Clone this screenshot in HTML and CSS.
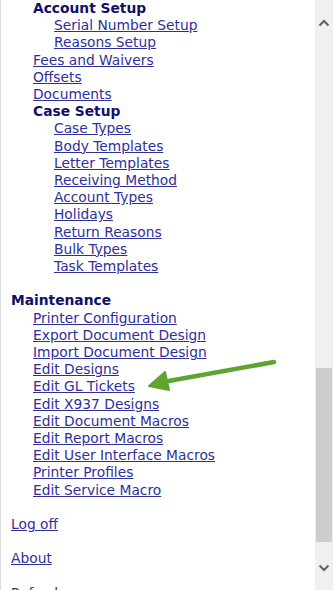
FILE: index.html
```html
<!DOCTYPE html>
<html>
<head>
<meta charset="utf-8">
<link rel="stylesheet" href="styles.css">
</head>
<body>
<div class="frame">
  <div class="content">
    <ul class="menu">
      <li class="l2 head">Account Setup</li>
      <li class="l3"><a href="#">Serial Number Setup</a></li>
      <li class="l3"><a href="#">Reasons Setup</a></li>
      <li class="l2"><a href="#">Fees and Waivers</a></li>
      <li class="l2"><a href="#">Offsets</a></li>
      <li class="l2"><a href="#">Documents</a></li>
      <li class="l2 head">Case Setup</li>
      <li class="l3"><a href="#">Case Types</a></li>
      <li class="l3"><a href="#">Body Templates</a></li>
      <li class="l3"><a href="#">Letter Templates</a></li>
      <li class="l3"><a href="#">Receiving Method</a></li>
      <li class="l3"><a href="#">Account Types</a></li>
      <li class="l3"><a href="#">Holidays</a></li>
      <li class="l3"><a href="#">Return Reasons</a></li>
      <li class="l3"><a href="#">Bulk Types</a></li>
      <li class="l3"><a href="#">Task Templates</a></li>
    </ul>
    <ul class="menu section">
      <li class="l1 head">Maintenance</li>
      <li class="l2"><a href="#">Printer Configuration</a></li>
      <li class="l2"><a href="#">Export Document Design</a></li>
      <li class="l2"><a href="#">Import Document Design</a></li>
      <li class="l2"><a href="#">Edit Designs</a></li>
      <li class="l2"><a href="#">Edit GL Tickets</a></li>
      <li class="l2"><a href="#">Edit X937 Designs</a></li>
      <li class="l2"><a href="#">Edit Document Macros</a></li>
      <li class="l2"><a href="#">Edit Report Macros</a></li>
      <li class="l2"><a href="#">Edit User Interface Macros</a></li>
      <li class="l2"><a href="#">Printer Profiles</a></li>
      <li class="l2"><a href="#">Edit Service Macro</a></li>
    </ul>
    <p class="single"><a href="#">Log off</a></p>
    <p class="single"><a href="#">About</a></p>
    <p class="single"><a href="#">Refresh</a></p>
    <svg class="arrow" width="140" height="40" viewBox="0 0 140 40">
      <path d="M129 7 L18 27" stroke="#5ea42f" stroke-width="4.5" stroke-linecap="round" fill="none"/>
      <path d="M4 31 L20 17 L24 35 Z" fill="#5ea42f" stroke="#5ea42f" stroke-width="2" stroke-linejoin="round"/>
    </svg>
  </div>
  <div class="scrollbar">
    <div class="btn">
      <svg width="12" height="8" viewBox="0 0 12 8"><path d="M1.5 6.5 L6 2 L10.5 6.5" stroke="#606060" stroke-width="2" fill="none"/></svg>
    </div>
    <div class="track"><div class="thumb"></div></div>
    <div class="btn">
      <svg width="12" height="8" viewBox="0 0 12 8"><path d="M1.5 1.5 L6 6 L10.5 1.5" stroke="#606060" stroke-width="2" fill="none"/></svg>
    </div>
  </div>
</div>
</body>
</html>
```

FILE: styles.css
```css
html, body {
  margin: 0;
  padding: 0;
  background: #ffffff;
}
.frame {
  display: flex;
  width: 333px;
  height: 590px;
  overflow: hidden;
}
.content {
  position: relative;
  flex: 1;
  border-left: 1px solid #dcdcdc;
  overflow: hidden;
  font-family: "DejaVu Sans", Verdana, sans-serif;
  font-size: 13.8px;
  line-height: 17.2px;
}
.menu {
  list-style: none;
  margin: 0;
  padding: 0;
}
.section {
  margin-top: 17.2px;
}
.menu li {
  white-space: nowrap;
}
.l1 { padding-left: 10px; }
.l2 { padding-left: 32px; }
.l3 { padding-left: 53px; }
.head {
  font-weight: bold;
  color: #10106a;
}
a {
  color: #2f2f9c;
  text-decoration: underline;
}
.single {
  margin: 17.2px 0 0 0;
  padding-left: 10px;
}
.arrow {
  position: absolute;
  left: 144px;
  top: 355px;
}
.scrollbar {
  width: 18px;
  background: #f0f0f0;
  display: flex;
  flex-direction: column;
}
.btn {
  height: 17px;
  display: flex;
  align-items: center;
  justify-content: center;
}
.btn:first-child { margin-top: 14px; }
.btn:last-child { margin-bottom: 14px; }
.track {
  flex: 1;
  display: flex;
  flex-direction: column;
  justify-content: flex-start;
}
.thumb {
  margin: 337px 1px 0 1px;
  height: 174px;
  background: #cdcdcd;
}
```
